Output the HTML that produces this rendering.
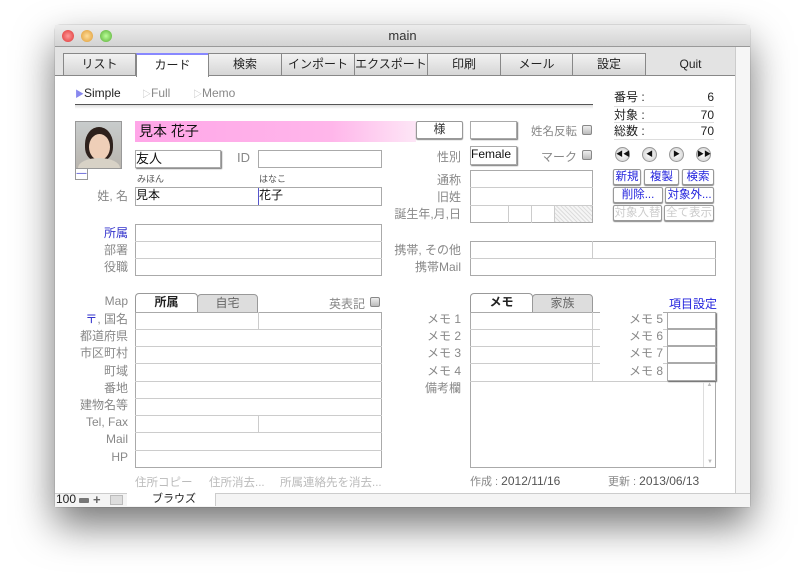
<!DOCTYPE html>
<html><head><meta charset="utf-8"><style>
*{margin:0;padding:0;box-sizing:border-box}
body{width:805px;height:575px;background:#fff;position:relative;overflow:hidden;font-family:"Liberation Sans","Noto Sans CJK JP",sans-serif;font-size:12px;color:#222}
.a{position:absolute}
.win{left:55px;top:25px;width:695px;height:482px;background:#fff;border-radius:5px 5px 2px 2px;box-shadow:0 18px 40px rgba(0,0,0,.55),0 0 1px rgba(0,0,0,.5);overflow:hidden}
.tb{left:0;top:0;width:695px;height:22px;background:linear-gradient(#ececec,#d3d3d3);border-bottom:1px solid #999;text-align:center;font-size:13px;line-height:22px;color:#333}
.dot{top:5px;width:12px;height:12px;border-radius:50%}
.tab{top:53px;height:23px;border:1px solid #888;background:linear-gradient(#f2f2f2,#d6d6d6);text-align:center;font-size:12px;line-height:21px;color:#222}
.lbl{color:#888;font-size:11.5px;text-align:right}
.f{border:1px solid #aaa;background:#fff}
.g{border-top:1px solid #ccc}
.btn{border:1px solid #999;border-radius:2px;background:#fff;color:#22d;font-size:11.5px;text-align:center;line-height:14px;box-shadow:0 1px 1px #888}
.cb{width:10px;height:10px;border:1px solid #888;border-radius:2px;background:linear-gradient(#eee,#bbb)}
.nav{top:147px;width:15px;height:15px;border-radius:50%;border:1px solid #999;background:radial-gradient(#fff,#ccc);font-size:7px;text-align:center;line-height:13px;color:#111;font-weight:bold}
</style></head><body>
<div class="a win"></div>
<div class="a tb" style="left:55px;top:25px">main</div>
<div class="a dot" style="left:62px;top:30px;background:radial-gradient(#f99,#d33)"></div>
<div class="a dot" style="left:81px;top:30px;background:radial-gradient(#fd9,#d93)"></div>
<div class="a dot" style="left:100px;top:30px;background:radial-gradient(#bf9,#5a3)"></div>
<div class="a" style="left:55px;top:47px;width:680px;height:29px;background:#e3e3e3;border-bottom:1px solid #888"></div>
<div class="a" style="left:735px;top:47px;width:15px;height:446px;background:#f6f6f6;border-left:1px solid #ccc"></div>
<div class="a tab" style="left:63px;width:73px">リスト</div>
<div class="a tab" style="left:136px;width:73px;background:#fff;border-bottom:none;border-top:2px solid #88f;height:24px">カード</div>
<div class="a tab" style="left:208px;width:74px">検索</div>
<div class="a tab" style="left:281px;width:74px">インポート</div>
<div class="a tab" style="left:354px;width:74px">エクスポート</div>
<div class="a tab" style="left:427px;width:74px">印刷</div>
<div class="a tab" style="left:500px;width:73px">メール</div>
<div class="a tab" style="left:572px;width:74px">設定</div>
<div class="a" style="left:646px;top:54px;width:89px;text-align:center;font-size:12px;line-height:20px">Quit</div>

<div class="a" style="left:75px;top:86px;font-size:12px"><span style="color:#88e;font-size:9px">▶</span>Simple</div>
<div class="a" style="left:142px;top:86px;font-size:12px;color:#888"><span style="color:#bbb;font-size:9px">▷</span>Full</div>
<div class="a" style="left:193px;top:86px;font-size:12px;color:#888"><span style="color:#bbb;font-size:9px">▷</span>Memo</div>
<div class="a" style="left:75px;top:104px;width:518px;height:5px;border-top:1px solid #555;background:linear-gradient(#ddd,#fff)"></div>

<div class="a" style="left:614px;top:89px;width:100px;font-size:12px;line-height:16px">番号 :<span style="float:right">6</span></div>
<div class="a" style="left:614px;top:106px;width:100px;font-size:12px;line-height:16px;border-top:1px solid #ddd">対象 :<span style="float:right">70</span></div>
<div class="a" style="left:614px;top:122px;width:100px;font-size:12px;line-height:16px;border-top:1px solid #ddd;border-bottom:1px solid #ddd">総数 :<span style="float:right">70</span></div>
<div class="a nav" style="left:615px">◀◀</div><div class="a nav" style="left:642px">◀</div><div class="a nav" style="left:669px">▶</div><div class="a nav" style="left:696px">▶▶</div>
<div class="a btn" style="left:613px;top:169px;width:28px;height:16px">新規</div>
<div class="a btn" style="left:644px;top:169px;width:35px;height:16px">複製</div>
<div class="a btn" style="left:682px;top:169px;width:32px;height:16px">検索</div>
<div class="a btn" style="left:613px;top:187px;width:50px;height:16px">削除...</div>
<div class="a btn" style="left:665px;top:187px;width:49px;height:16px">対象外...</div>
<div class="a btn" style="left:613px;top:205px;width:49px;height:16px;color:#ccc">対象入替</div>
<div class="a btn" style="left:664px;top:205px;width:50px;height:16px;color:#ccc">全て表示</div>

<div class="a" style="left:75px;top:121px;width:47px;height:48px;border:1px solid #999;overflow:hidden;background:linear-gradient(#c8cccc,#b9b5ae)">
<div class="a" style="left:9px;top:5px;width:28px;height:34px;border-radius:50% 50% 40% 40%;background:#2e211c"></div>
<div class="a" style="left:13px;top:12px;width:21px;height:26px;border-radius:50%;background:#efcfb8"></div>
<div class="a" style="left:2px;top:36px;width:42px;height:20px;border-radius:50% 50% 0 0;background:#d8d2c6"></div>
</div>
<div class="a" style="left:75px;top:168px;width:13px;height:12px;border:1px solid #999;color:#33c;font-size:10px;text-align:center;line-height:9px">—</div>

<div class="a" style="left:135px;top:121px;width:281px;height:21px;background:linear-gradient(90deg,#ffa6e8,#ffb6ea 70%,#fde6f6);font-size:14px;line-height:21px;padding-left:4px;color:#111">見本 花子</div>
<div class="a btn" style="left:416px;top:121px;width:47px;height:18px;color:#333;font-size:12px">様</div>
<div class="a f" style="left:470px;top:121px;width:47px;height:18px;box-shadow:1px 1px 1px #777"></div>
<div class="a lbl" style="left:520px;top:123px;width:57px">姓名反転</div><div class="a cb" style="left:582px;top:125px"></div>
<div class="a f" style="left:135px;top:150px;width:86px;height:18px;box-shadow:1px 1px 1px #777;font-size:13px;line-height:15px;color:#111">友人</div>
<div class="a lbl" style="left:230px;top:150px;width:20px;font-size:13px">ID</div>
<div class="a f" style="left:258px;top:150px;width:124px;height:18px"></div>
<div class="a lbl" style="left:420px;top:148px;width:41px;font-size:12px">性別</div>
<div class="a f" style="left:470px;top:146px;width:47px;height:19px;box-shadow:1px 1px 1px #777;font-size:12px;line-height:15px;color:#111">Female</div>
<div class="a lbl" style="left:530px;top:148px;width:47px;font-size:12px">マーク</div><div class="a cb" style="left:582px;top:150px"></div>
<div class="a" style="left:137px;top:172px;font-size:9px;color:#555">みほん</div>
<div class="a" style="left:259px;top:172px;font-size:9px;color:#555">はなこ</div>
<div class="a lbl" style="left:70px;top:187px;width:58px;font-size:12px">姓, 名</div>
<div class="a f" style="left:135px;top:187px;width:247px;height:19px;font-size:12px;line-height:15px;color:#111">見本</div>
<div class="a" style="left:258px;top:188px;border-left:1px solid #55c;height:17px;font-size:12px;line-height:15px;color:#111;background:#fff">花子</div>

<div class="a lbl" style="left:400px;top:171px;width:61px;font-size:12px">通称</div>
<div class="a lbl" style="left:400px;top:188px;width:61px;font-size:12px">旧姓</div>
<div class="a lbl" style="left:390px;top:205px;width:71px;font-size:12px">誕生年,月,日</div>
<div class="a f" style="left:470px;top:170px;width:123px;height:53px"></div>
<div class="a g" style="left:470px;top:187px;width:123px"></div><div class="a g" style="left:470px;top:205px;width:123px"></div>
<div class="a" style="left:508px;top:205px;height:18px;border-left:1px solid #ccc"></div>
<div class="a" style="left:531px;top:205px;height:18px;border-left:1px solid #ccc"></div>
<div class="a" style="left:554px;top:206px;width:38px;height:16px;border-left:1px solid #ccc;background:repeating-linear-gradient(45deg,#ddd 0 1px,#f5f5f5 1px 3px)"></div>

<div class="a lbl" style="left:80px;top:224px;width:48px;font-size:12px;color:#33c">所属</div>
<div class="a lbl" style="left:80px;top:241px;width:48px;font-size:12px">部署</div>
<div class="a lbl" style="left:80px;top:258px;width:48px;font-size:12px">役職</div>
<div class="a f" style="left:135px;top:224px;width:247px;height:52px"></div>
<div class="a g" style="left:135px;top:241px;width:247px"></div><div class="a g" style="left:135px;top:258px;width:247px"></div>
<div class="a lbl" style="left:380px;top:241px;width:81px;font-size:12px">携帯, その他</div>
<div class="a lbl" style="left:380px;top:258px;width:81px;font-size:12px">携帯Mail</div>
<div class="a f" style="left:470px;top:241px;width:246px;height:35px"></div>
<div class="a g" style="left:470px;top:258px;width:246px"></div>
<div class="a" style="left:592px;top:241px;height:17px;border-left:1px solid #ccc"></div>

<div class="a lbl" style="left:80px;top:294px;width:48px;font-size:12px">Map</div>
<div class="a" style="left:135px;top:293px;width:63px;height:20px;border:1px solid #999;border-bottom:none;border-radius:4px 4px 0 0;background:#fff;text-align:center;font-size:12px;font-weight:bold;line-height:17px">所属</div>
<div class="a" style="left:197px;top:294px;width:61px;height:19px;border:1px solid #999;border-radius:4px 4px 0 0;background:#ddd;text-align:center;font-size:12px;color:#666;line-height:16px">自宅</div>
<div class="a lbl" style="left:320px;top:295px;width:45px;font-size:12px">英表記</div><div class="a cb" style="left:370px;top:297px"></div>
<div class="a f" style="left:135px;top:312px;width:247px;height:156px"></div>
<div class="a" style="left:75px;top:311px;width:53px;font-size:12px;line-height:17.2px;color:#888;text-align:right"><span style="color:#33c">〒</span>, 国名<br>都道府県<br>市区町村<br>町域<br>番地<br>建物名等<br>Tel, Fax<br>Mail<br>HP</div>
<div class="a g" style="left:135px;top:329px;width:247px"></div><div class="a g" style="left:135px;top:346px;width:247px"></div><div class="a g" style="left:135px;top:363px;width:247px"></div><div class="a g" style="left:135px;top:381px;width:247px"></div><div class="a g" style="left:135px;top:398px;width:247px"></div><div class="a g" style="left:135px;top:415px;width:247px"></div><div class="a g" style="left:135px;top:432px;width:247px"></div><div class="a g" style="left:135px;top:450px;width:247px"></div>
<div class="a" style="left:258px;top:312px;height:17px;border-left:1px solid #ccc"></div>
<div class="a" style="left:258px;top:415px;height:17px;border-left:1px solid #ccc"></div>
<div class="a" style="left:135px;top:474px;font-size:11.5px;color:#bbb">住所コピー</div>
<div class="a" style="left:209px;top:474px;font-size:11.5px;color:#bbb">住所消去...</div>
<div class="a" style="left:280px;top:474px;font-size:11.5px;color:#bbb">所属連絡先を消去...</div>

<div class="a" style="left:470px;top:293px;width:63px;height:20px;border:1px solid #999;border-bottom:none;border-radius:4px 4px 0 0;background:#fff;text-align:center;font-size:12px;font-weight:bold;line-height:17px">メモ</div>
<div class="a" style="left:532px;top:294px;width:61px;height:19px;border:1px solid #999;border-radius:4px 4px 0 0;background:#ddd;text-align:center;font-size:12px;color:#666;line-height:16px">家族</div>
<div class="a" style="left:669px;top:295px;font-size:12px;color:#22d">項目設定</div>
<div class="a" style="left:410px;top:311px;width:51px;font-size:12px;line-height:17.2px;color:#888;text-align:right">メモ 1<br>メモ 2<br>メモ 3<br>メモ 4<br>備考欄</div>
<div class="a f" style="left:470px;top:312px;width:246px;height:156px"></div>
<div class="a g" style="left:470px;top:329px;width:246px"></div><div class="a g" style="left:470px;top:346px;width:246px"></div><div class="a g" style="left:470px;top:363px;width:246px"></div><div class="a g" style="left:470px;top:381px;width:246px"></div>
<div class="a" style="left:592px;top:312px;height:69px;border-left:1px solid #ccc"></div>
<div class="a" style="left:600px;top:311px;width:63px;font-size:12px;line-height:17.2px;color:#888;text-align:right;background:#fff">メモ 5<br>メモ 6<br>メモ 7<br>メモ 8</div>
<div class="a f" style="left:667px;top:312px;width:49px;height:17px;box-shadow:1px 1px 1px #666"></div>
<div class="a f" style="left:667px;top:329px;width:49px;height:17px;box-shadow:1px 1px 1px #666"></div>
<div class="a f" style="left:667px;top:346px;width:49px;height:17px;box-shadow:1px 1px 1px #666"></div>
<div class="a f" style="left:667px;top:363px;width:49px;height:18px;box-shadow:1px 1px 1px #666"></div>
<div class="a" style="left:703px;top:382px;width:12px;height:85px;border-left:1px solid #ddd;font-size:6px;color:#bbb;text-align:center">▲<div style="position:absolute;bottom:2px;width:12px">▼</div></div>
<div class="a" style="left:470px;top:473px;font-size:12px;color:#555"><span style="color:#888;font-size:11px">作成 : </span>2012/11/16</div>
<div class="a" style="left:608px;top:473px;font-size:12px;color:#555"><span style="color:#888;font-size:11px">更新 : </span>2013/06/13</div>

<div class="a" style="left:55px;top:493px;width:695px;height:14px;background:#f4f4f4;border-top:1px solid #ccc"></div>
<div class="a" style="left:56px;top:492px;font-size:12px;line-height:14px">100</div>
<div class="a" style="left:79px;top:498px;width:10px;height:5px;background:#777;border-radius:1px"></div>
<div class="a" style="left:93px;top:493px;font-size:13px;line-height:13px;color:#666;font-weight:bold">+</div>
<div class="a" style="left:110px;top:495px;width:13px;height:10px;border:1px solid #bbb;background:#ddd"></div>
<div class="a" style="left:127px;top:493px;width:89px;height:13px;background:#fff;border-right:1px solid #ccc;font-size:11px;line-height:13px;padding-left:25px">ブラウズ</div>
</body></html>
